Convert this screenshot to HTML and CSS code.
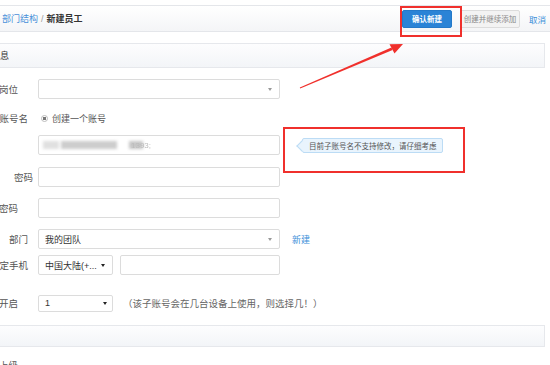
FILE: index.html
```html
<!DOCTYPE html>
<html lang="zh-CN">
  <head>
    <meta charset="UTF-8" />
    <meta name="viewport" content="width=device-width, initial-scale=1.0" />
    <title>新建员工</title>
    <link rel="stylesheet" href="styles.css">
  </head>
  <body>
    <div class="page">
      <div class="header">
        <div class="crumbs">
          <a class="crumb-link" href="#">部门结构</a>
          <span class="sep">/</span>
          <span class="crumb-current">新建员工</span>
        </div>
        <div class="actions">
          <button class="btn btn-primary">确认新建</button>
          <button class="btn btn-default">创建并继续添加</button>
          <a class="link" href="#">取消</a>
        </div>
      </div>

      <div class="section-title">基本信息</div>

      <div class="form">
        <div class="row">
          <label class="label label-short">所在岗位</label>
          <div class="select wide"><span></span><i class="caret"></i></div>
        </div>

        <div class="row row-radio">
          <label class="label">子账号名</label>
          <span class="radio"><i class="radio-dot"></i>创建一个账号</span>
        </div>

        <div class="row row-account">
          <label class="label"></label>
          <div class="input wide blurred">
            <i class="blob blob-a"></i>
            <i class="blob blob-b"></i>
            <i class="blob blob-c"></i>
            <span class="ghost">1393;</span>
          </div>
          <div class="tip">目前子账号名不支持修改，请仔细考虑</div>
        </div>

        <div class="row">
          <label class="label label-long">密码</label>
          <div class="input wide"></div>
        </div>

        <div class="row">
          <label class="label label-short">确认密码</label>
          <div class="input wide"></div>
        </div>

        <div class="row row-dept">
          <label class="label">部门</label>
          <div class="select wide"><span>我的团队</span><i class="caret"></i></div>
          <a class="link new-link" href="#">新建</a>
        </div>

        <div class="row row-phone">
          <label class="label">绑定手机</label>
          <div class="select small"><span>中国大陆(+...</span><i class="caret dark"></i></div>
          <div class="input phone"></div>
        </div>

        <div class="row">
          <label class="label label-short">设备开启</label>
          <div class="select small short"><span>1</span><i class="caret dark"></i></div>
          <span class="note">（该子账号会在几台设备上使用，则选择几！）</span>
        </div>
      </div>

      <div class="section-title section-empty"></div>

      <div class="form">
        <div class="row row-cut">
          <label class="label label-short">直属上级</label>
        </div>
      </div>
    </div>

    <div class="mark mark-btn"></div>
    <div class="mark mark-tip"></div>
    <svg class="arrow" width="550" height="365" viewBox="0 0 550 365">
      <polygon points="300.2,88.4 299.8,87.6 391.4,47.4 392.6,50.0" fill="#f0302c" />
      <polygon points="403,44 389.5,44.3 394.5,53.6" fill="#f0302c" />
    </svg>
  </body>
</html>
```

FILE: styles.css
```css
* {
  margin: 0;
  padding: 0;
  box-sizing: border-box;
  font-family: "Liberation Sans", "Noto Sans CJK SC", sans-serif;
}

body {
  background: #fff;
  width: 550px;
  height: 365px;
  overflow: hidden;
  position: relative;
  color: #444;
  font-size: 9px;
}

/* page is scrolled a bit to the right, so shift it left */
.page {
  margin-left: -40px;
  width: 590px;
  padding-top: 5px;
}

.header {
  height: 27px;
  border-top: 1px solid #e4e6ea;
  border-bottom: 1px solid #e4e6ea;
  background: linear-gradient(#fff, #f4f5f7);
  display: flex;
  align-items: center;
  justify-content: space-between;
  padding: 0 4px 0 42px;
}

.crumbs {
  display: flex;
  align-items: center;
  gap: 3px;
  font-size: 9px;
}

.crumb-link {
  color: #4a90d9;
  text-decoration: none;
}

.sep {
  color: #999;
}

.crumb-current {
  color: #333;
  font-weight: bold;
}

.actions {
  display: flex;
  align-items: center;
  gap: 8px;
}

.btn {
  height: 18px;
  border-radius: 2px;
  font-size: 7.5px;
  cursor: pointer;
}

.btn-primary {
  width: 50px;
  background: #2a83d6;
  border: 1px solid #2479c9;
  color: #fff;
  font-weight: bold;
}

.btn-default {
  width: 60px;
  background: #f3f3f3;
  border: 1px solid #dcdcdc;
  color: #888;
}

.link {
  color: #3b8fd9;
  text-decoration: none;
  font-size: 8.5px;
}

.actions .link {
  margin-left: 1px;
}

.section-title {
  margin: 11px 5px 0 0;
  height: 25px;
  border: 1px solid #e6e8ec;
  background: linear-gradient(#fdfdfe, #f3f5f8);
  padding-left: 12px;
  display: flex;
  align-items: center;
  color: #333;
  font-size: 9px;
}

.section-empty {
  height: 22px;
  margin-top: 12px;
}

.form {
  padding-top: 11px;
}

.row {
  display: flex;
  align-items: center;
  height: 20px;
  margin-bottom: 11px;
}

.row-radio {
  height: 16px;
  margin-bottom: 9px;
}

.row-account {
  margin-bottom: 12px;
}

.row-dept {
  margin-bottom: 6px;
}

.row-phone {
  margin-bottom: 18px;
}

.row-cut {
  height: 14px;
}

.label {
  width: 68px;
  flex-shrink: 0;
  margin-right: 10px;
  text-align: right;
  color: #555;
  font-size: 9.5px;
  white-space: nowrap;
}

.label-short {
  padding-right: 10px;
}

.label-long {
  margin-right: 5px;
  width: 73px;
}

.input,
.select {
  height: 20px;
  border: 1px solid #dcdcdc;
  border-radius: 2px;
  background: #fff;
}

.wide {
  width: 242px;
}

.select {
  display: flex;
  align-items: center;
  justify-content: space-between;
  padding: 0 7px 0 6px;
  color: #333;
  font-size: 9px;
}

.select.small {
  width: 75px;
}

.select.short {
  height: 17px;
  padding-right: 5px;
}

.caret {
  width: 0;
  height: 0;
  border-left: 2.5px solid transparent;
  border-right: 2.5px solid transparent;
  border-top: 3px solid #999;
}

.caret.dark {
  border-top-color: #222;
}

.input.phone {
  width: 160px;
  margin-left: 7px;
}

.blurred {
  display: flex;
  align-items: center;
  padding-left: 4px;
}

.blob {
  display: block;
  height: 8px;
  background: #cdcdcd;
  filter: blur(1.5px);
}

.blob-a {
  width: 16px;
  background: #e0e0e0;
}

.blob-b {
  width: 56px;
  margin-left: 2px;
}

.blob-c {
  width: 14px;
  margin-left: 12px;
  background: #c6c6c6;
}

.ghost {
  color: #bbb;
  font-size: 8px;
  margin-left: -12px;
  filter: blur(0.6px);
}

.radio {
  display: flex;
  align-items: center;
  gap: 4px;
  color: #555;
  font-size: 9px;
}

.radio-dot {
  display: block;
  width: 7px;
  height: 7px;
  border-radius: 50%;
  border: 1px solid #bbb;
  background: radial-gradient(#777 0 1.6px, #fff 1.8px);
  margin-left: 3px;
}

.tip {
  position: relative;
  margin-left: 22px;
  height: 15px;
  padding: 0 5px 0 6px;
  display: flex;
  align-items: center;
  background: #e9f4fd;
  border: 1px solid #bcdcf5;
  border-radius: 2px;
  color: #555;
  font-size: 7.5px;
  white-space: nowrap;
}

.tip::before {
  content: "";
  position: absolute;
  left: -5px;
  top: 3px;
  width: 7px;
  height: 7px;
  background: #e9f4fd;
  border-left: 1px solid #bcdcf5;
  border-bottom: 1px solid #bcdcf5;
  transform: rotate(45deg);
}

.new-link {
  margin-left: 12px;
  font-size: 9px;
}

.note {
  margin-left: 10px;
  color: #666;
  font-size: 9.5px;
  white-space: nowrap;
}

/* red annotations drawn over the screenshot */
.mark {
  position: absolute;
  border: 2px solid #f0302c;
}

.mark-btn {
  left: 400px;
  top: 6px;
  width: 62px;
  height: 31px;
}

.mark-tip {
  left: 283px;
  top: 127px;
  width: 182px;
  height: 46px;
}

.arrow {
  position: absolute;
  left: 0;
  top: 0;
  pointer-events: none;
}
```
